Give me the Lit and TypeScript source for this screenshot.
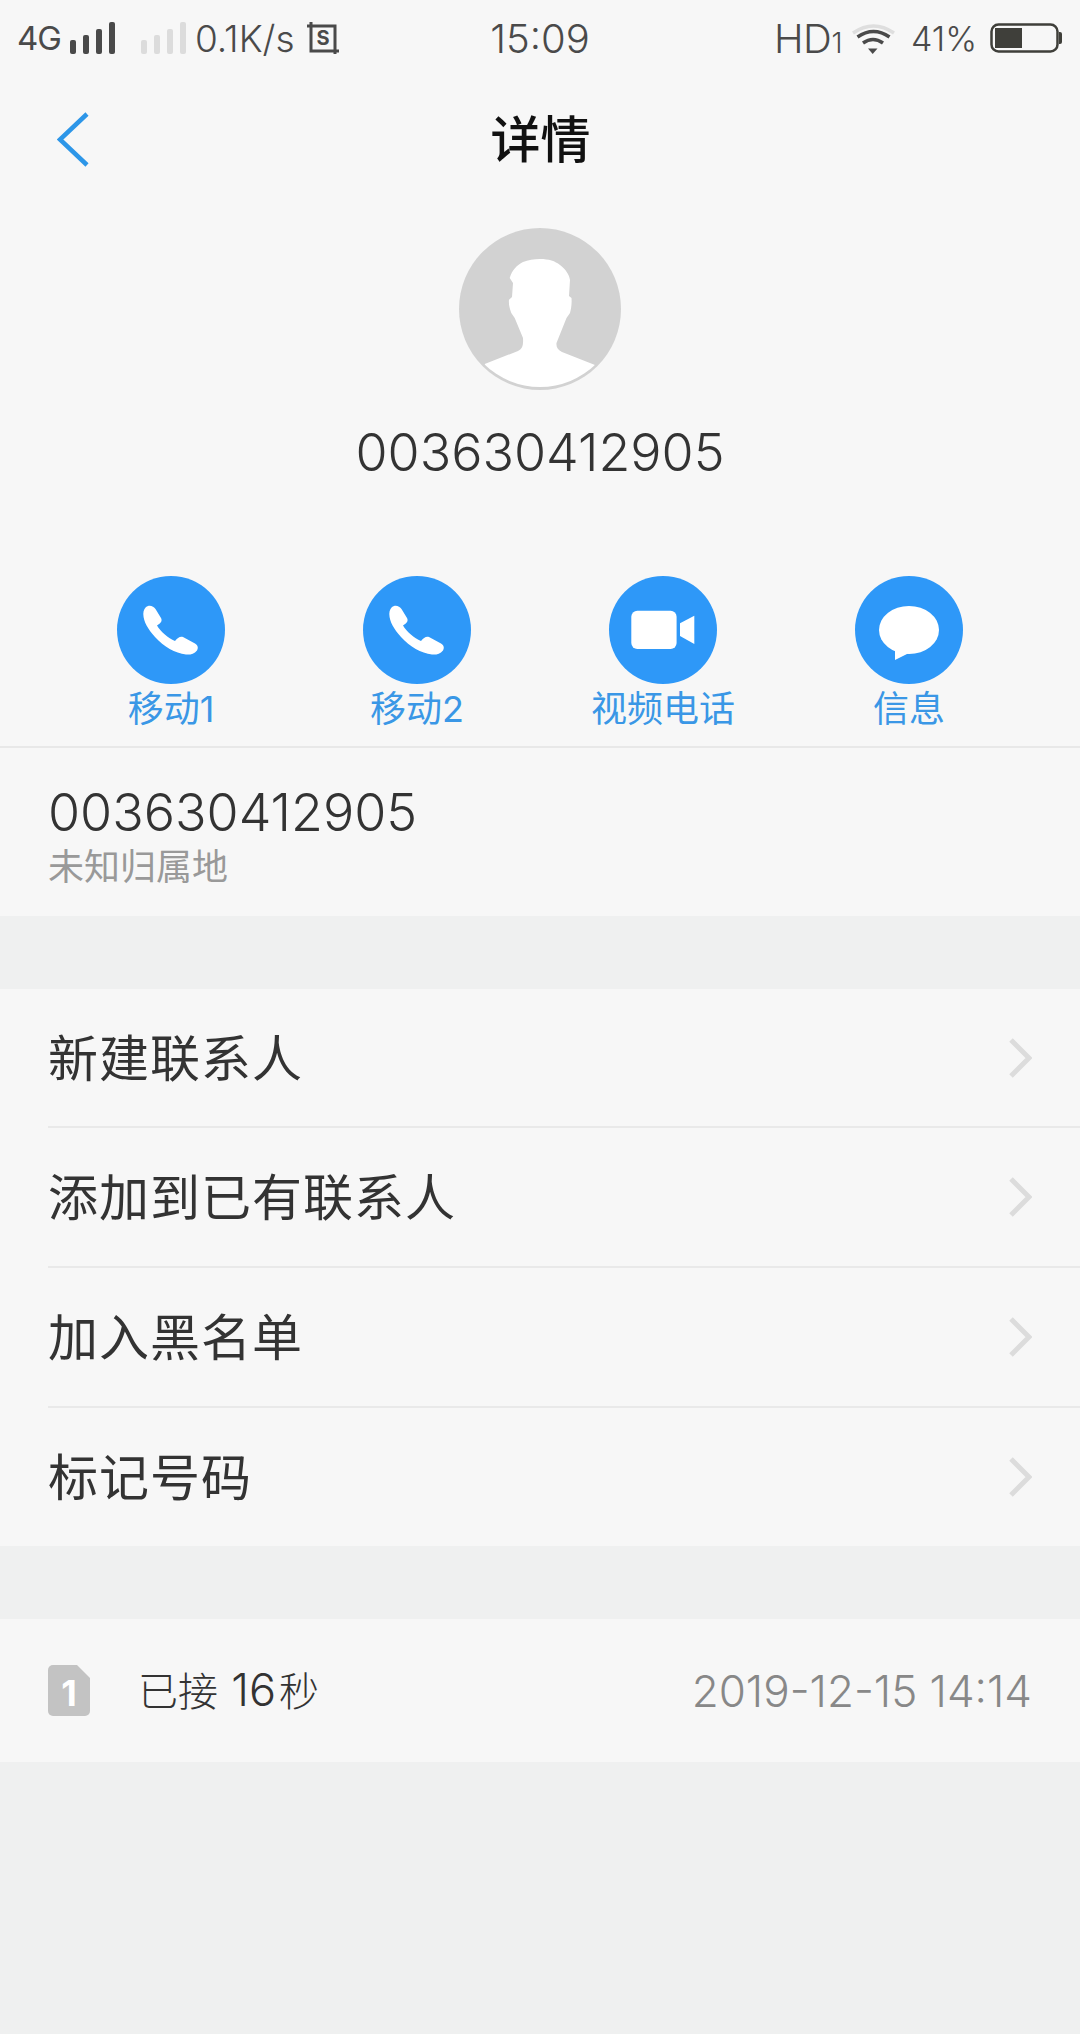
import { LitElement, html, css, svg } from 'lit';
import { customElement } from 'lit/decorators.js';

const phone = svg`<path fill="#fff" d="M31 30C34 29 37 31 38.5 33L44 42C45.5 45 44 47 40 49.5C44 56 51 62 58 65C60.5 62 63 60 66 61L78 67.5C81 69 81.5 72 80 74.5C77 78 73 79 69 78.5C58 77 47 71 38 61C31 53 26.5 46 26.3 38C26.3 34 28 31 31 30Z"/>`;
const video = svg`<rect x="22.3" y="34.7" width="45.3" height="38.3" rx="6" fill="#fff"/><path fill="#fff" d="M71 47.3L85.3 39.7V68L71 60Z"/>`;
const message = svg`<ellipse cx="54" cy="54" rx="30" ry="24" fill="#fff"/><path fill="#fff" d="M40 70V84L54 77Z"/>`;

const actions = [
  { icon: phone, label: '移动1' },
  { icon: phone, label: '移动2' },
  { icon: video, label: '视频电话' },
  { icon: message, label: '信息' },
];

const menu = ['新建联系人', '添加到已有联系人', '加入黑名单', '标记号码'];

const bars = (color: string) => svg`
  <rect x="0" y="18" width="6" height="14" rx="2" fill=${color}/>
  <rect x="13" y="13" width="6" height="19" rx="2" fill=${color}/>
  <rect x="26" y="7" width="6" height="25" rx="2" fill=${color}/>
  <rect x="39" y="0" width="6" height="32" rx="2" fill=${color}/>`;

@customElement('app-root')
export class AppRoot extends LitElement {
  static styles = css`
    :host {
      display: flex;
      flex-direction: column;
      min-height: 2034px;
      background: #eff0f0;
      font-family: Inter, 'Noto Sans CJK SC', sans-serif;
      color: #333;
    }
    .top {
      background: #f7f7f7;
    }
    .status {
      display: grid;
      grid-template-columns: 1fr auto 1fr;
      align-items: center;
      height: 76px;
      padding: 0 18px;
      color: #4a4a4a;
    }
    .status-left,
    .status-right {
      display: flex;
      align-items: center;
    }
    .status-right {
      justify-content: flex-end;
    }
    .net {
      font-size: 33px;
      letter-spacing: -1px;
      margin: 0 9px 0 -1px;
    }
    .speed {
      font-size: 37px;
      font-weight: 300;
      margin: 0 12px 0 9px;
    }
    .time {
      font-size: 40px;
      font-weight: 300;
    }
    .hd {
      font-size: 40px;
      font-weight: 300;
      letter-spacing: -0.5px;
    }
    .hd small {
      font-size: 28px;
    }
    .battery-pct {
      font-size: 34px;
      font-weight: 300;
      margin: 0 13px 0 15px;
    }
    .wifi {
      margin-left: 10px;
    }
    .nav {
      display: grid;
      grid-template-columns: 1fr auto 1fr;
      align-items: center;
      height: 128px;
      padding: 0 56px 0 57px;
    }
    .nav h1 {
      margin: 0;
      font-size: 50px;
      font-weight: 500;
      line-height: 60px;
      color: #111;
    }
    .profile {
      display: flex;
      flex-direction: column;
      align-items: center;
      padding-top: 24px;
    }
    .avatar {
      display: block;
    }
    .profile-number {
      font-size: 52px;
      font-weight: 300;
      line-height: 70px;
      margin-top: 28px;
      color: #333;
    }
    .actions {
      display: grid;
      grid-template-columns: repeat(4, 246px);
      padding: 88px 48px 0;
      height: 170px;
      border-bottom: 2px solid #e8e8e8;
    }
    .action {
      display: flex;
      flex-direction: column;
      align-items: center;
    }
    .action svg {
      display: block;
    }
    .action span {
      font-size: 36px;
      line-height: 46px;
      padding-top: 2px;
      color: #3a97e6;
    }
    .number {
      height: 168px;
      padding: 33px 48px 0;
      box-sizing: border-box;
    }
    .number-main {
      font-size: 52px;
      font-weight: 300;
      line-height: 64px;
    }
    .number-sub {
      font-size: 36px;
      line-height: 44px;
      color: #999;
    }
    .panel {
      background: #f7f7f7;
      margin-top: 73px;
    }
    .row {
      display: flex;
      align-items: center;
      justify-content: space-between;
      height: 140px;
      margin-left: 48px;
      padding-right: 48px;
      box-sizing: border-box;
      font-size: 50px;
      letter-spacing: 1px;
    }
    .row:first-child {
      height: 137px;
    }
    .row + .row {
      border-top: 2px solid #e9e9e9;
    }
    .label {
      line-height: 60px;
      margin-top: 2px;
    }
    .record {
      display: flex;
      align-items: center;
      height: 143px;
      padding: 0 48px;
    }
    .record-label {
      margin: -4px 0 0 48px;
      font-size: 40px;
      font-weight: 300;
      flex: 1;
    }
    .record-label .secs {
      font-size: 45px;
      margin: 0 3px 0 2px;
    }
    .record-date {
      font-size: 44px;
      font-weight: 300;
      color: #888;
    }
  `;

  render() {
    return html`
      <div class="top">
        <div class="status">
          <div class="status-left">
            <span class="net">4G</span>
            <svg width="45" height="32" viewBox="0 0 45 32">${bars('#4a4a4a')}</svg>
            <svg width="45" height="32" viewBox="0 0 45 32" style="margin-left:26px">${bars('#dcdcdc')}</svg>
            <span class="speed">0.1K/s</span>
            <svg width="32" height="32" viewBox="0 0 32 32">
              <path d="M4 0V29H32M0 4H28V32" fill="none" stroke="#4a4a4a" stroke-width="3"/>
              <text x="16" y="23" font-size="20" font-weight="700" fill="#4a4a4a" text-anchor="middle" font-family="Inter">S</text>
            </svg>
          </div>
          <div class="time">15:09</div>
          <div class="status-right">
            <span class="hd">HD<small>1</small></span>
            <svg class="wifi" width="44" height="32" viewBox="0 0 44 32">
              <path d="M1 11Q21.5-3 42 11" fill="none" stroke="#dedede" stroke-width="3.5"/>
              <path d="M5.5 15Q21.5 4 37.5 15" fill="none" stroke="#4a4a4a" stroke-width="3.5"/>
              <path d="M11 21Q21 14 31 21" fill="none" stroke="#4a4a4a" stroke-width="3.5"/>
              <path d="M16 26.5H25.5L20.7 32Z" fill="#4a4a4a"/>
            </svg>
            <span class="battery-pct">41%</span>
            <svg width="72" height="30" viewBox="0 0 72 30">
              <rect x="1.5" y="1.5" width="66" height="27" rx="7" fill="none" stroke="#3f3f3a" stroke-width="2.5"/>
              <rect x="5" y="5" width="27" height="20" fill="#3f3f3a"/>
              <path d="M69 9H70A2 2 0 0 1 72 11V19A2 2 0 0 1 70 21H69Z" fill="#3f3f3a"/>
            </svg>
          </div>
        </div>
        <div class="nav">
          <svg width="32" height="56" viewBox="0 0 32 56">
            <path d="M30 2L3 27.5L30 53" fill="none" stroke="#2d96e8" stroke-width="4.5"/>
          </svg>
          <h1>详情</h1>
          <span></span>
        </div>
        <div class="profile">
          <svg class="avatar" width="162" height="162" viewBox="0 0 162 162">
            <defs><clipPath id="inner"><circle cx="81" cy="79.5" r="79.5"/></clipPath></defs>
            <circle cx="81" cy="81" r="81" fill="#d2d2d2"/>
            <path clip-path="url(#inner)" fill="#fff" d="M81 31C90 31 96 33 101 37C107 42 110 46 111 52L110 68L112.5 70C113 76 112 81 111 85L107.5 90L97.5 115C97 119 99 122 103 124L136 137L136 170H25L25.7 136L59 123C63 121 64.5 118 64 110L55.7 90L52.3 85C50.5 80 49.5 76 50 71.7L53 69L54 55L50.7 50C53 42 58 37 64 34C69 32 75 31 81 31Z"/>
          </svg>
          <div class="profile-number">003630412905</div>
        </div>
        <div class="actions">
          ${actions.map(
            (a) => html`
              <div class="action">
                <svg width="108" height="108" viewBox="0 0 108 108">
                  <circle cx="54" cy="54" r="54" fill="#2e98f8"/>
                  ${a.icon}
                </svg>
                <span>${a.label}</span>
              </div>
            `
          )}
        </div>
        <div class="number">
          <div class="number-main">003630412905</div>
          <div class="number-sub">未知归属地</div>
        </div>
      </div>
      <div class="panel">
        ${menu.map(
          (item) => html`
            <div class="row">
              <span class="label">${item}</span>
              <svg width="24" height="40" viewBox="0 0 24 40">
                <path d="M3 2L21 20L3 38" fill="none" stroke="#dcdcdc" stroke-width="5"/>
              </svg>
            </div>
          `
        )}
      </div>
      <div class="panel record">
        <svg width="42" height="51" viewBox="0 0 42 51">
          <path d="M5 0H29L42 13V46A5 5 0 0 1 37 51H5A5 5 0 0 1 0 46V5A5 5 0 0 1 5 0Z" fill="#c3c3c3"/>
          <text x="21" y="41" font-size="36" font-weight="700" fill="#fff" text-anchor="middle" font-family="Inter">1</text>
        </svg>
        <span class="record-label">已接 <span class="secs">16</span>秒</span>
        <span class="record-date">2019-12-15 14:14</span>
      </div>
    `;
  }
}
